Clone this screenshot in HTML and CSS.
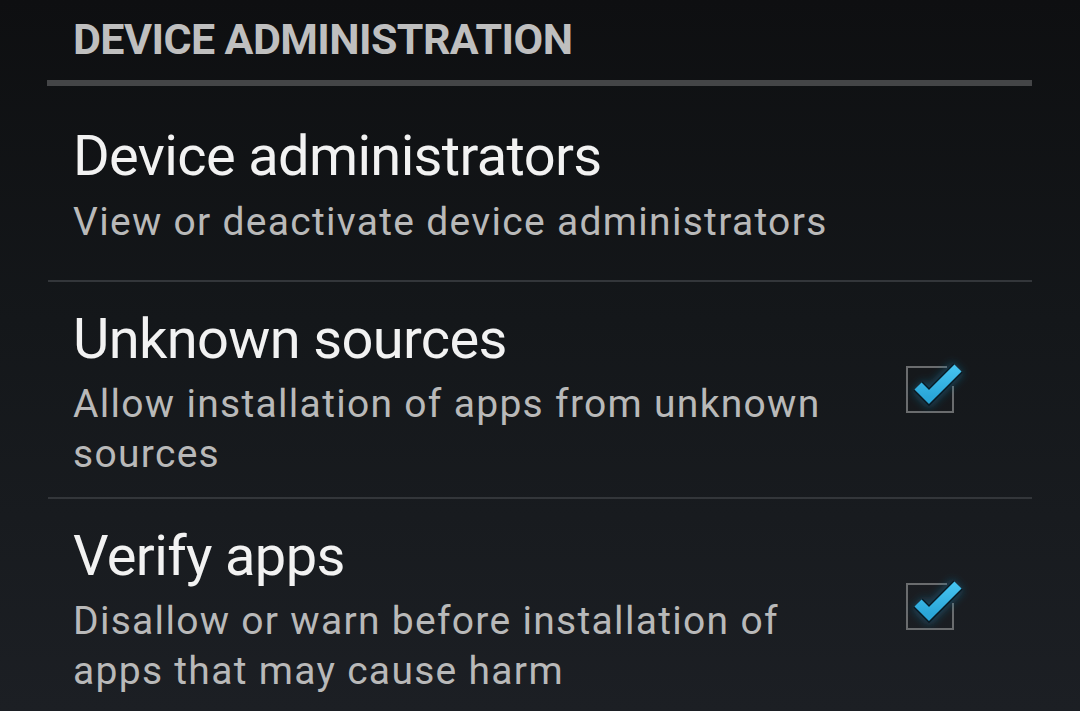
FILE: index.html
```html
<!DOCTYPE html>
<html>
<head>
<meta charset="utf-8">
<link rel="stylesheet" href="styles.css">
</head>
<body>
<div class="screen">
  <div class="category">DEVICE ADMINISTRATION</div>
  <div class="category-rule"></div>

  <div class="pref pref-first">
    <div class="pref-text">
      <div class="pref-title">Device administrators</div>
      <div class="pref-summary">View or deactivate device administrators</div>
    </div>
  </div>
  <div class="rule"></div>

  <div class="pref">
    <div class="pref-text">
      <div class="pref-title">Unknown sources</div>
      <div class="pref-summary">Allow installation of apps from unknown sources</div>
    </div>
    <div class="widget">
      <svg class="check" width="60" height="50" viewBox="0 0 60 50">
        <defs>
          <filter id="glow1" x="-50%" y="-50%" width="200%" height="200%">
            <feGaussianBlur stdDeviation="4"/>
          </filter>
          <linearGradient id="blue1" x1="0" y1="0" x2="0" y2="1">
            <stop offset="0" stop-color="#45c3f0"/>
            <stop offset="1" stop-color="#2aa6d8"/>
          </linearGradient>
        </defs>
        <path d="M0 1H41M1 0V47M0 46H48M47 20V47" stroke="#6a6c6e" stroke-width="2" fill="none"/>
        <polyline points="12,20 23,31 52,2" fill="none" stroke="#1d6f95" stroke-opacity="0.55" stroke-width="16" filter="url(#glow1)"/>
        <polyline points="12,20 23,31 52,2" fill="none" stroke="#081a24" stroke-width="13" stroke-linejoin="miter"/>
        <polyline points="12,20 23,31 52,2" fill="none" stroke="url(#blue1)" stroke-width="10" stroke-linejoin="miter"/>
      </svg>
    </div>
  </div>
  <div class="rule"></div>

  <div class="pref">
    <div class="pref-text">
      <div class="pref-title">Verify apps</div>
      <div class="pref-summary">Disallow or warn before installation of apps that may cause harm</div>
    </div>
    <div class="widget">
      <svg class="check" width="60" height="50" viewBox="0 0 60 50">
        <defs>
          <filter id="glow2" x="-50%" y="-50%" width="200%" height="200%">
            <feGaussianBlur stdDeviation="4"/>
          </filter>
          <linearGradient id="blue2" x1="0" y1="0" x2="0" y2="1">
            <stop offset="0" stop-color="#45c3f0"/>
            <stop offset="1" stop-color="#2aa6d8"/>
          </linearGradient>
        </defs>
        <path d="M0 1H41M1 0V47M0 46H48M47 20V47" stroke="#6a6c6e" stroke-width="2" fill="none"/>
        <polyline points="12,20 23,31 52,2" fill="none" stroke="#1d6f95" stroke-opacity="0.55" stroke-width="16" filter="url(#glow2)"/>
        <polyline points="12,20 23,31 52,2" fill="none" stroke="#081a24" stroke-width="13" stroke-linejoin="miter"/>
        <polyline points="12,20 23,31 52,2" fill="none" stroke="url(#blue2)" stroke-width="10" stroke-linejoin="miter"/>
      </svg>
    </div>
  </div>
</div>
</body>
</html>
```

FILE: styles.css
```css
html, body {
  margin: 0;
  padding: 0;
  height: 100%;
}
body {
  background: linear-gradient(to bottom, #0e0f11 0%, #14171a 45%, #1c1f24 100%);
  font-family: Roboto, "Noto Sans", "Liberation Sans", sans-serif;
  overflow: hidden;
}
.screen {
  width: 1080px;
  height: 711px;
  padding: 0 48px;
  box-sizing: border-box;
}
.category {
  padding: 9px 0 11px 25px;
  font-size: 43px;
  line-height: 60px;
  font-weight: 700;
  color: #bfbfbf;
  letter-spacing: -0.6px;
}
.category-rule {
  height: 6px;
  background: #444547;
  margin-left: -1px;
}
.rule {
  height: 2px;
  background: #33363a;
}
.pref {
  display: flex;
  align-items: center;
  padding: 25px 0 18px 25px;
}
.pref-first {
  padding-top: 38px;
  padding-bottom: 33px;
}
.pref-text {
  flex: 1;
  min-width: 0;
}
.pref-title {
  font-size: 56px;
  line-height: 64px;
  color: #f2f2f2;
  margin-bottom: 8px;
  letter-spacing: -0.65px;
}
.pref-first .pref-title {
  margin-bottom: 9px;
}
.pref-summary {
  font-size: 39px;
  line-height: 50px;
  color: #b9b9b9;
  letter-spacing: 1.3px;
}
.widget {
  width: 126px;
  padding-left: 56px;
  display: flex;
  align-items: center;
  flex: none;
}
.check {
  display: block;
  overflow: visible;
  margin-top: -4px;
}
```
